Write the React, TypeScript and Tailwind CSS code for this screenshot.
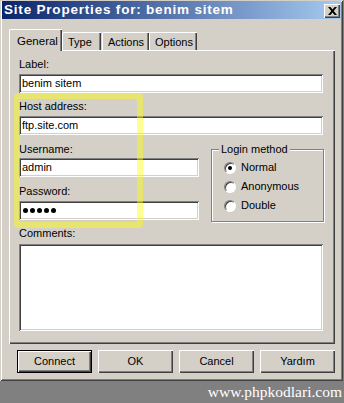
import React from "react";

// classic win2k bevels
const raised =
  "shadow-[inset_1px_1px_0_#ffffff,inset_-1px_-1px_0_#404040,inset_-2px_-2px_0_#808080]";
const sunken =
  "shadow-[inset_1px_1px_0_#808080,inset_-1px_-1px_0_#ffffff,inset_2px_2px_0_#404040,inset_-2px_-2px_0_#d4d0c8]";

function TextBox({ value, width }: { value?: React.ReactNode; width: string }) {
  return (
    <div className={`${width} h-[19px] bg-white ${sunken} flex items-center pl-[3px] text-black`}>
      {value}
    </div>
  );
}

function Radio({ label, checked }: { label: string; checked?: boolean }) {
  return (
    <div className="flex items-center h-[19px]">
      <div className="w-[12px] h-[12px] rounded-full bg-white border border-t-[#808080] border-l-[#808080] border-r-[#ffffff] border-b-[#ffffff] flex items-center justify-center shadow-[inset_1px_1px_0_#404040]">
        {checked && <div className="w-[4px] h-[4px] rounded-full bg-black" />}
      </div>
      <span className="ml-[5px]">{label}</span>
    </div>
  );
}

function Button({ label, primary }: { label: string; primary?: boolean }) {
  return (
    <div className={`w-[75px] h-[23px] ${primary ? "border border-black" : ""}`}>
      <div className={`w-full h-full ${raised} flex items-center justify-center text-black`}>
        {label}
      </div>
    </div>
  );
}

export default function App() {
  const tabs = ["Type", "Actions", "Options"];
  return (
    <div
      className="w-[344px] h-[403px] bg-[#808080] text-[11px] leading-none text-black"
      style={{ fontFamily: '"Liberation Sans", Arial, sans-serif' }}
    >
      <div className="relative w-[343px] h-[381px] bg-[#d4d0c8] shadow-[inset_1px_1px_0_#d4d0c8,inset_-1px_-1px_0_#404040,inset_2px_2px_0_#ffffff,inset_-2px_-2px_0_#808080] pt-[1px] px-[2px]">
        {/* title bar */}
        <div className="h-[18px] flex items-center justify-between bg-[linear-gradient(to_right,#0a246a,#a6caf0)] pl-[2px] pr-[1px]">
          <span className="text-white font-bold text-[13.5px] tracking-[0.8px]">Site Properties for: benim sitem</span>
          <div className={`w-[16px] h-[14px] bg-[#d4d0c8] ${raised} flex items-center justify-center mt-[2px]`}>
            <svg width="9" height="8" viewBox="0 0 9 8">
              <path d="M0 0h2.4l2.1 2.6L6.6 0H9L5.7 4 9 8H6.6L4.5 5.4 2.4 8H0l3.3-4z" fill="#000" />
            </svg>
          </div>
        </div>

        {/* tabs */}
        <div className="flex items-end ml-[7px] mt-[9px] h-[22px]">
          <div className="relative z-10 w-[53px] h-[22px] bg-[#d4d0c8] border-t border-l border-white rounded-tl-[2px] shadow-[inset_-1px_0_0_#404040,inset_-2px_0_0_#808080] pl-[7px] pt-[6px] -mb-[1px] text-[11.5px]">
            General
          </div>
          {tabs.map((t, i) => (
            <div
              key={t}
              className={`h-[18px] bg-[#d4d0c8] border-t border-l border-white rounded-tl-[2px] shadow-[inset_-1px_0_0_#404040,inset_-2px_0_0_#808080] pl-[5px] pt-[4px] text-[11px] ${
                i === 0 ? "w-[39px]" : i === 1 ? "w-[47px] ml-[1px]" : "w-[48px]"
              }`}
            >
              {t}
            </div>
          ))}
        </div>

        {/* panel */}
        <div className="ml-[7px] w-[326px] h-[294px] border-t border-l border-white shadow-[inset_-1px_-1px_0_#404040,inset_-2px_-2px_0_#808080] pl-[9px] pt-[8px]">
          <div className="h-[10px]">Label:</div>
          <div className="mt-[5px]">
            <TextBox width="w-[304px]" value="benim sitem" />
          </div>
          <div className="mt-[8px] h-[10px]">Host address:</div>
          <div className="mt-[5px]">
            <TextBox width="w-[304px]" value="ftp.site.com" />
          </div>
          <div className="flex items-start">
            <div>
              <div className="mt-[9px] h-[10px]">Username:</div>
              <div className="mt-[4px]">
                <TextBox width="w-[180px]" value="admin" />
              </div>
              <div className="mt-[9px] h-[10px]">Password:</div>
              <div className="mt-[5px]">
                <TextBox
                  width="w-[180px]"
                  value={
                    <span className="flex gap-[2px] ml-[1px]">
                      {[0, 1, 2, 3, 4].map((d) => (
                        <span key={d} className="w-[5px] h-[5px] rounded-full bg-black" />
                      ))}
                    </span>
                  }
                />
              </div>
            </div>
            <div className="relative ml-[12px] mt-[14px] w-[113px] h-[73px] border border-[#808080] shadow-[inset_1px_1px_0_#ffffff,1px_1px_0_#ffffff] pl-[12px] pt-[8px]">
              <span className="absolute -top-[6px] left-[7px] bg-[#d4d0c8] px-[2px]">Login method</span>
              <Radio label="Normal" checked />
              <Radio label="Anonymous" />
              <Radio label="Double" />
            </div>
          </div>
          <div className="mt-[6px] h-[10px]">Comments:</div>
          <div className={`mt-[6px] w-[304px] h-[87px] bg-white ${sunken}`} />
        </div>

        {/* buttons */}
        <div className="flex gap-[6px] ml-[15px] mt-[6px]">
          <Button label="Connect" primary />
          <Button label="OK" />
          <Button label="Cancel" />
          <Button label="Yardım" />
        </div>

        {/* yellow highlight annotation */}
        <div className="absolute left-[14px] top-[93px] w-[129px] h-[135px] border-[6px] border-[#ffff0070] rounded-[4px]" />
      </div>
      <div
        className="h-[22px] flex items-center justify-end pr-[2px] text-white text-[15.5px]"
        style={{ fontFamily: '"Liberation Serif", "Times New Roman", serif' }}
      >
        www.phpkodlari.com
      </div>
    </div>
  );
}
